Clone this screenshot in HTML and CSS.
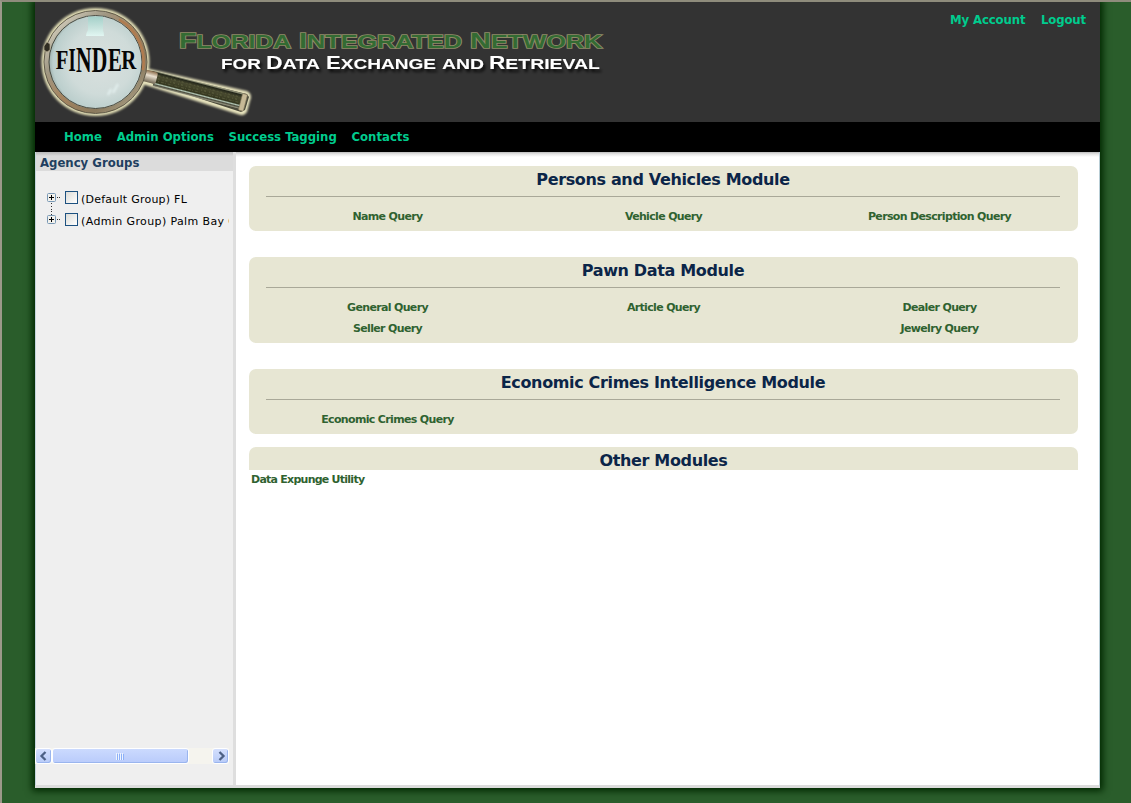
FILE: index.html
```
<!DOCTYPE html>
<html lang="en">
<head>
<meta charset="utf-8">
<title>FINDER</title>
<link rel="stylesheet" href="styles.css">
</head>
<body>
<div class="page">
  <header class="banner">
    <svg class="logo" width="580" height="120" viewBox="35 2 580 120" role="img" aria-label="FINDER">
      <defs>
        <linearGradient id="rim" x1="0" y1="0" x2="1" y2="1">
          <stop offset="0" stop-color="#e8e4d4"/><stop offset=".3" stop-color="#a09884"/>
          <stop offset=".5" stop-color="#a5845f"/><stop offset=".75" stop-color="#8a7a5e"/><stop offset="1" stop-color="#b8b098"/>
        </linearGradient>
        <radialGradient id="lens" cx=".55" cy=".5" r=".55">
          <stop offset="0" stop-color="#d9e0de"/><stop offset=".6" stop-color="#cfdbd9"/>
          <stop offset=".88" stop-color="#bccfcd"/><stop offset="1" stop-color="#8da09d"/>
        </radialGradient>
        <linearGradient id="grip" x1="0" y1="0" x2="0" y2="1">
          <stop offset="0" stop-color="#b9bb9c"/><stop offset=".1" stop-color="#23261a"/>
          <stop offset=".3" stop-color="#48492f"/><stop offset=".72" stop-color="#35371f"/>
          <stop offset=".8" stop-color="#b5c9b8"/><stop offset=".88" stop-color="#4b4b3c"/><stop offset="1" stop-color="#a5a48f"/>
        </linearGradient>
        <linearGradient id="collar" x1="0" y1="0" x2="0" y2="1">
          <stop offset="0" stop-color="#8c6d4b"/><stop offset=".4" stop-color="#e9e0cf"/><stop offset="1" stop-color="#6e6450"/>
        </linearGradient>
        <linearGradient id="shine" x1="0" y1="0" x2="0" y2="1">
          <stop offset="0" stop-color="#9fd0c8"/><stop offset=".6" stop-color="#c8e6e0"/><stop offset="1" stop-color="#e4fbf6"/>
        </linearGradient>
        <filter id="soft" x="-20%" y="-20%" width="140%" height="140%"><feGaussianBlur stdDeviation="1.2"/></filter>
        <filter id="drop" x="-5%" y="-30%" width="110%" height="180%"><feDropShadow dx="2" dy="3" stdDeviation="1.600" flood-color="#000" flood-opacity=".8"/></filter>
      </defs>
      <g filter="url(#soft)">
        <circle cx="95.500" cy="62" r="54" fill="#e0dcb4"/>
        <path d="M141 67L247 91Q253 94 250 101L247 112Q244 117 237 114L139 83Z" fill="#e6e2bc"/>
      </g>
      <path d="M143 70L153 71L247 94L249 97L245 110L241 112L152 83L141 79Z" fill="#4b4a3b"/>
      <g transform="rotate(14.500 147 76)">
        <rect x="155" y="69" width="92" height="15.500" fill="url(#grip)"/>
        <path d="M158 73H243M158 76H243" stroke="#5f6240" stroke-width="1" stroke-dasharray="2 3 1 2"/>
        <path d="M159 78.500H243" stroke="#55573a" stroke-width="1" stroke-dasharray="1 2 3 1"/>
        <rect x="244" y="69" width="5" height="17" rx="1" fill="#c7b996" stroke="#877d61" stroke-width=".6"/>
        <rect x="141" y="70" width="16" height="12" rx="2" fill="url(#collar)"/>
      </g>
      <circle cx="95.500" cy="62" r="51.500" fill="#eeeade"/>
      <circle cx="95.500" cy="62" r="49" fill="url(#lens)" stroke="url(#rim)" stroke-width="4.500"/>
      <circle cx="95.500" cy="62" r="46.500" fill="none" stroke="#3e3c30" stroke-width=".9"/>
      <circle cx="95.500" cy="62" r="51.500" fill="none" stroke="#45402f" stroke-width=".8"/>
      <path d="M119 19.500A49 49 0 0 1 143 70" fill="none" stroke="#b07c50" stroke-width="2.500"/>
      <path d="M88 16.500H103V30Q104 33 104 36H86Q86 33 88 30Z" fill="url(#shine)" opacity=".85"/>
      <path d="M108 95l3-6M113 93l5-9" stroke="#f2ffff" stroke-width="2" opacity=".6" filter="url(#soft)"/>
      <path d="M44 46l3-4 3 2v6l-3 2-3-2z" fill="#302d22" stroke="#b4ac90" stroke-width=".7"/>
      <g transform="scale(.6 1)">
        <text class="finder"><tspan x="93" y="69" font-size="27" textLength="21" lengthAdjust="spacingAndGlyphs">F</tspan><tspan x="114" y="71" font-size="33" textLength="12" lengthAdjust="spacingAndGlyphs">I</tspan><tspan x="126.500" y="72" font-size="36">N</tspan><tspan x="153" y="72" font-size="36">D</tspan><tspan x="180" y="71" font-size="33" textLength="23" lengthAdjust="spacingAndGlyphs">E</tspan><tspan x="202" y="69.500" font-size="27" textLength="25" lengthAdjust="spacingAndGlyphs">R</tspan></text>
      </g>
      <g class="title">
        <text x="179" y="48" textLength="112" lengthAdjust="spacingAndGlyphs">F<tspan class="small">LORIDA</tspan></text>
        <text x="299" y="48" textLength="163" lengthAdjust="spacingAndGlyphs">I<tspan class="small">NTEGRATED</tspan></text>
        <text x="470" y="48" textLength="132" lengthAdjust="spacingAndGlyphs">N<tspan class="small">ETWORK</tspan></text>
      </g>
      <g class="subtitle" filter="url(#drop)">
        <text x="221" y="69" textLength="40" lengthAdjust="spacingAndGlyphs"><tspan class="small">FOR</tspan></text>
        <text x="266" y="69" textLength="54" lengthAdjust="spacingAndGlyphs">D<tspan class="small">ATA</tspan></text>
        <text x="326" y="69" textLength="110" lengthAdjust="spacingAndGlyphs">E<tspan class="small">XCHANGE</tspan></text>
        <text x="442" y="69" textLength="42" lengthAdjust="spacingAndGlyphs"><tspan class="small">AND</tspan></text>
        <text x="489" y="69" textLength="111" lengthAdjust="spacingAndGlyphs">R<tspan class="small">ETRIEVAL</tspan></text>
      </g>
    </svg>
    <nav class="account"><a>My Account</a><a>Logout</a></nav>
  </header>
  <nav class="menu"><a>Home</a><a>Admin Options</a><a>Success Tagging</a><a>Contacts</a></nav>
  <div class="body">
    <aside class="sidebar">
      <h2>Agency Groups</h2>
      <div class="tree">
        <div class="node"><svg width="14" height="22" viewBox="0 0 14 22"><path d="M4.500 14v8" stroke="#333" stroke-dasharray="1 2"/><path d="M10 8.500h4" stroke="#333" stroke-dasharray="1 1"/><rect x=".5" y="4.500" width="8" height="8" rx="1" fill="#f2f1ec" stroke="#7898b5"/><path d="M2 8.500h5M4.500 6v5" stroke="#000"/></svg><i class="check"></i><span>(Default Group) FL</span></div>
        <div class="node"><svg width="14" height="22" viewBox="0 0 14 22"><path d="M4.500 0v4" stroke="#333" stroke-dasharray="1 2"/><path d="M10 8.500h4" stroke="#333" stroke-dasharray="1 1"/><rect x=".5" y="4.500" width="8" height="8" rx="1" fill="#f2f1ec" stroke="#7898b5"/><path d="M2 8.500h5M4.500 6v5" stroke="#000"/></svg><i class="check"></i><span class="long">(Admin Group) Palm Bay C</span></div>
      </div>
      <div class="scrollbar">
        <span class="arrow"><svg width="14" height="14" viewBox="0 0 14 14"><path d="M8.500 3L4.500 7l4 4" /></svg></span>
        <span class="thumb"><svg width="9" height="7" viewBox="0 0 9 7"><path d="M.5 0v7M2.500 0v7M4.500 0v7M6.500 0v7" stroke="#eef4fe"/><path d="M1.500 1v6M3.500 1v6M5.500 1v6M7.500 1v6" stroke="#8cb0f8"/></svg></span>
        <span class="arrow end"><svg width="14" height="14" viewBox="0 0 14 14"><path d="M5.500 3l4 4-4 4" /></svg></span>
      </div>
    </aside>
    <main class="content">
      <section class="card"><h1>Persons and Vehicles Module</h1>
        <div class="links"><a>Name Query</a><a>Vehicle Query</a><a>Person Description Query</a></div></section>
      <section class="card"><h1>Pawn Data Module</h1>
        <div class="links"><a>General Query</a><a>Article Query</a><a>Dealer Query</a><a>Seller Query</a><a></a><a>Jewelry Query</a></div></section>
      <section class="card last"><h1>Economic Crimes Intelligence Module</h1>
        <div class="links"><a>Economic Crimes Query</a></div></section>
      <section class="other"><h1>Other Modules</h1></section>
      <a class="utility">Data Expunge Utility</a>
    </main>
  </div>
</div>
</body>
</html>
```
FILE: styles.css
```
* { box-sizing: border-box; }
html { height: 100%; }
body {
  margin: 0;
  height: 803px;
  overflow: hidden;
  padding: 0 30px 15px 33px;
  background: #2a5d2b;
  border-top: 2px solid;
  border-left: 2px solid;
  border-color: #8f8c7c #716f64 #716f64 #9c998a;
  font-family: "DejaVu Sans", Verdana, sans-serif;
}
.page {
  width: 1065px;
  height: 786px;
  display: flex;
  flex-direction: column;
  background: #fff;
  box-shadow: 0 0 7px 3px #002800;
}
.banner {
  height: 120px;
  display: flex;
  justify-content: space-between;
  background: #333;
}
.logo { display: block; }
.finder { font-family: "Liberation Serif", serif; font-weight: bold; fill: #050505; }
.title { font: bold 22px "Liberation Sans", Arial, sans-serif; fill: #336b33; stroke: #8f8b68; stroke-width: 1.6px; paint-order: stroke; }
.title .small { font-size: 19px; }
.subtitle { font: bold 18px "Liberation Sans", Arial, sans-serif; fill: #fff; }
.subtitle .small { font-size: 15.5px; }
.account, .menu {
  display: flex;
  gap: 14.7px;
  font: bold 13px/16px "DejaVu Sans Condensed", "DejaVu Sans", Tahoma, sans-serif;
  font-stretch: condensed;
  color: #00cc8e;
  white-space: nowrap;
}
.account { padding: 10px 14px 0 0; gap: 15.5px; letter-spacing: -.12px; }
.menu { height: 30px; padding: 7px 0 0 29px; background: #000; }
.body {
  flex: 1;
  display: flex;
  background: linear-gradient(#bbb 0, #e4e4e4 2px, rgba(255,255,255,0) 5px);
  border-bottom: 3px solid #dcdcdc;
  border-right: 1px solid #b9ced6;
}
.sidebar {
  width: 201px;
  display: flex;
  flex-direction: column;
  background: #efefef;
  border-left: 1px solid #c5d5de;
  border-right: 3px solid #dedede;
}
.sidebar h2 {
  margin: 0;
  height: 19px;
  padding: 3px 0 0 4px;
  background: linear-gradient(#b8b8b8, #dcdcdc 4px);
  color: #1f3f60;
  font: bold 13px/16px "DejaVu Sans Condensed", "DejaVu Sans", Tahoma, sans-serif;
  font-stretch: condensed;
}
.tree { width: 193px; padding: 18px 0 0 11px; overflow: hidden; flex: 1; }
.node { height: 22px; display: flex; align-items: flex-start; white-space: nowrap; font-size: 11px; line-height: 22px; letter-spacing: .24px; color: #000; }
.node svg { flex: none; }
.node span { margin-left: 3px; }
.node .long { letter-spacing: .38px; }
.check { flex: none; width: 13px; height: 13px; margin: 2px 0 0 4px; border: 1px solid #1d5180; background: linear-gradient(135deg, #dcdcd7, #fff); }
.scrollbar { width: 194px; height: 16px; margin: 0 0 21px -1px; display: flex; background: #f5f4ee; }
.arrow, .thumb {
  display: flex;
  align-items: center;
  justify-content: center;
  height: 16px;
  border: 1px solid #fff;
  border-radius: 3px;
  background: linear-gradient(#d3dffd, #b8cbf8);
  box-shadow: inset -1px -1px #9ab5ee;
}
.arrow { width: 17px; }
.arrow path { fill: none; stroke: #4d6185; stroke-width: 2.3; }
.thumb { width: 137px; background: linear-gradient(#cbdafe, #b9cbfb); }
.end { margin-left: auto; }
.content { flex: 1; padding: 14px 21px 0 13px; }
.card { height: 65px; margin-bottom: 26px; padding: 0 18px 0 17px; background: #e7e6d3; border-radius: 7px; }
.card:nth-child(2) { height: 86px; }
.card.last { margin-bottom: 13px; }
.card h1 { height: 31px; border-bottom: 1px solid #a9a898; }
h1 {
  margin: 0;
  padding-top: 4px;
  text-align: center;
  color: #0b2548;
  font: bold 16px/20px "DejaVu Sans", Verdana, sans-serif;
  letter-spacing: -.35px;
}
.card h1, .other h1 { padding-top: 4px; }
.links { display: grid; grid-template-columns: repeat(3, 276px); margin: 0 -17px; padding-top: 9px; }
.links a, .utility {
  height: 21px;
  text-align: center;
  color: #2f6230;
  font-size: 11px;
  line-height: 21px;
  font-weight: bold;
  letter-spacing: -.66px;
  padding-left: 1px;
  white-space: nowrap;
}
.other { height: 23px; background: #e7e6d3; border-radius: 7px 7px 0 0; }
.utility { display: block; width: max-content; padding-left: 2px; line-height: 19px; letter-spacing: -.75px; }
```
